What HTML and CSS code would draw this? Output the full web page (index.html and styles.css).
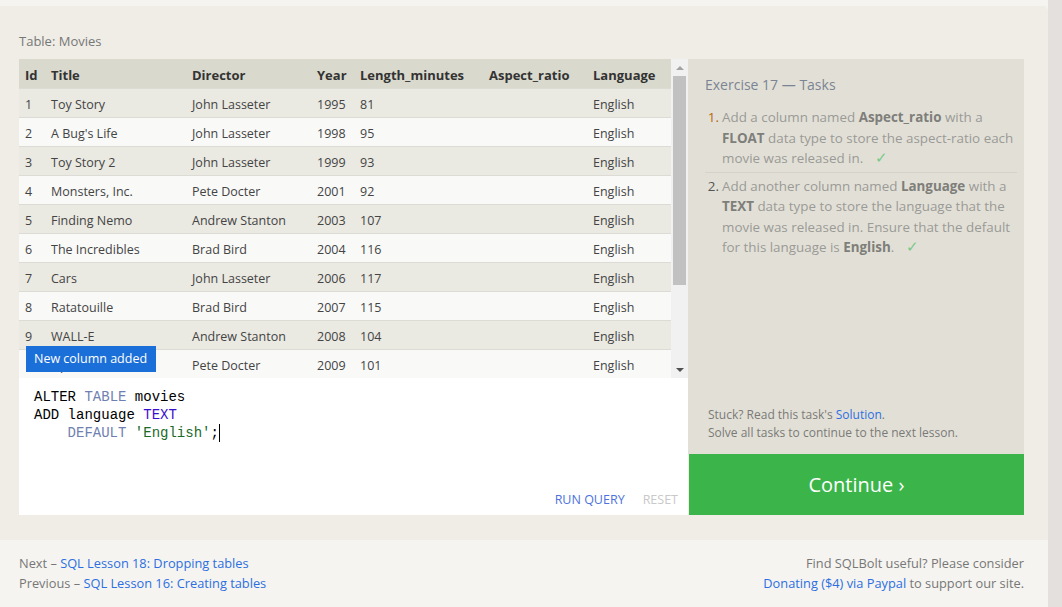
FILE: index.html
```html
<!DOCTYPE html>
<html>
<head>
<meta charset="utf-8">
<link rel="stylesheet" href="styles.css">
</head>
<body>
<div class="page">
  <div class="content">
    <div class="topstrip"></div>
    <div class="main">
      <div class="table-label">Table: Movies</div>
      <div class="workspace">
        <div class="left">
          <div class="table-area">
            <div class="table-scroll">
              <table class="movies">
                <colgroup>
                  <col style="width:26px"><col style="width:141px"><col style="width:125px"><col style="width:43px"><col style="width:129px"><col style="width:104px"><col style="width:84px">
                </colgroup>
                <thead>
                  <tr><th>Id</th><th>Title</th><th>Director</th><th>Year</th><th>Length_minutes</th><th>Aspect_ratio</th><th>Language</th></tr>
                </thead>
                <tbody>
                  <tr><td>1</td><td>Toy Story</td><td>John Lasseter</td><td>1995</td><td>81</td><td></td><td>English</td></tr>
                  <tr><td>2</td><td>A Bug's Life</td><td>John Lasseter</td><td>1998</td><td>95</td><td></td><td>English</td></tr>
                  <tr><td>3</td><td>Toy Story 2</td><td>John Lasseter</td><td>1999</td><td>93</td><td></td><td>English</td></tr>
                  <tr><td>4</td><td>Monsters, Inc.</td><td>Pete Docter</td><td>2001</td><td>92</td><td></td><td>English</td></tr>
                  <tr><td>5</td><td>Finding Nemo</td><td>Andrew Stanton</td><td>2003</td><td>107</td><td></td><td>English</td></tr>
                  <tr><td>6</td><td>The Incredibles</td><td>Brad Bird</td><td>2004</td><td>116</td><td></td><td>English</td></tr>
                  <tr><td>7</td><td>Cars</td><td>John Lasseter</td><td>2006</td><td>117</td><td></td><td>English</td></tr>
                  <tr><td>8</td><td>Ratatouille</td><td>Brad Bird</td><td>2007</td><td>115</td><td></td><td>English</td></tr>
                  <tr><td>9</td><td>WALL-E</td><td>Andrew Stanton</td><td>2008</td><td>104</td><td></td><td>English</td></tr>
                  <tr><td>10</td><td>Up</td><td>Pete Docter</td><td>2009</td><td>101</td><td></td><td>English</td></tr>
                  <tr><td>11</td><td>Toy Story 3</td><td>Lee Unkrich</td><td>2010</td><td>103</td><td></td><td>English</td></tr>
                  <tr><td>12</td><td>Cars 2</td><td>John Lasseter</td><td>2011</td><td>120</td><td></td><td>English</td></tr>
                  <tr><td>13</td><td>Brave</td><td>Brenda Chapman</td><td>2012</td><td>102</td><td></td><td>English</td></tr>
                  <tr><td>14</td><td>Monsters University</td><td>Dan Scanlon</td><td>2013</td><td>110</td><td></td><td>English</td></tr>
                </tbody>
              </table>
              <div class="tooltip">New column added</div>
            </div>
            <div class="scrollbar">
              <div class="sb-arrow sb-up"></div>
              <div class="sb-track"><div class="sb-thumb"></div></div>
              <div class="sb-arrow sb-down"></div>
            </div>
          </div>
          <div class="editor">
            <pre class="code"><span class="kw">ALTER</span> <span class="kw2">TABLE</span> movies
<span class="kw">ADD</span> language <span class="type">TEXT</span>
    <span class="kw2">DEFAULT</span> <span class="str">'English'</span>;<span class="cursor"></span></pre>
            <div class="editor-actions">
              <span class="run">RUN QUERY</span>
              <span class="reset">RESET</span>
            </div>
          </div>
        </div>
        <div class="right">
          <div class="tasks">
            <div class="tasks-title">Exercise 17 — Tasks</div>
            <ol class="task-list">
              <li class="task first"><span class="num">1.</span><span class="task-text">Add a column named <b>Aspect_ratio</b> with a <b>FLOAT</b> data type to store the aspect-ratio each movie was released in. <span class="check">✓</span></span></li>
              <li class="task"><span class="num">2.</span><span class="task-text">Add another column named <b>Language</b> with a <b>TEXT</b> data type to store the language that the movie was released in. Ensure that the default for this language is <b>English</b>. <span class="check">✓</span></span></li>
            </ol>
            <div class="tasks-help">
              <div>Stuck? Read this task's <span class="link">Solution</span>.</div>
              <div>Solve all tasks to continue to the next lesson.</div>
            </div>
          </div>
          <div class="continue">Continue ›</div>
        </div>
      </div>
    </div>
    <div class="footer">
      <div class="footer-left">
        <div>Next – <span class="link">SQL Lesson 18: Dropping tables</span></div>
        <div>Previous – <span class="link">SQL Lesson 16: Creating tables</span></div>
      </div>
      <div class="footer-right">
        <div>Find SQLBolt useful? Please consider</div>
        <div><span class="link">Donating ($4) via Paypal</span> to support our site.</div>
      </div>
    </div>
  </div>
  <div class="side-strip"></div>
</div>
</body>
</html>
```
FILE: styles.css
```css
* { box-sizing: border-box; }
html, body { margin: 0; padding: 0; }
body {
  background: #f5f4f0;
  font-family: "Open Sans", "Noto Sans", sans-serif;
  color: #555;
  width: 1062px;
  height: 607px;
  overflow: hidden;
}
.page { display: flex; height: 607px; }
.content { flex: 1; display: flex; flex-direction: column; }
.side-strip { width: 14px; background: #e3e0dd; }
.topstrip { height: 6px; background: #f5f4f0; }
.main {
  background: #efede6;
  border-radius: 0 5px 0 0;
  height: 534px;
  padding: 27px 24px 0 19px;
}
.table-label {
  font-size: 13px;
  color: #777;
  line-height: 17px;
  height: 26px;
}
.workspace { display: flex; }
.left { width: 669px; display: flex; flex-direction: column; }
.table-area { display: flex; height: 319px; }
.table-scroll {
  width: 652px;
  height: 319px;
  overflow: hidden;
  position: relative;
}
.movies {
  width: 652px;
  table-layout: fixed;
  border-collapse: collapse;
  font-size: 12.5px;
}
.movies tr { height: 29px; }
.movies th, .movies td {
  text-align: left;
  padding: 4px 0 0 6px;
  white-space: nowrap;
  overflow: hidden;
}
.movies th {
  background: #dad9cd;
  color: #333;
  font-weight: 700;
  font-size: 13px;
}
.movies td { color: #444; border-top: 1px solid #dcdbd6; }
.movies tbody tr:nth-child(odd) td { background: #eae9e2; }
.movies tbody tr:nth-child(even) td { background: #f9f9f8; }
.tooltip {
  position: absolute;
  left: 7px;
  top: 287px;
  width: 130px;
  height: 26px;
  background: #1b6fd8;
  color: #fff;
  font-size: 12.5px;
  line-height: 26px;
  padding-left: 8px;
}
.scrollbar {
  width: 17px;
  background: #f1f1f1;
  display: flex;
  flex-direction: column;
  align-items: center;
}
.sb-arrow { height: 17px; width: 17px; display: flex; align-items: center; justify-content: center; }
.sb-up::before {
  content: "";
  border-left: 4px solid transparent;
  border-right: 4px solid transparent;
  border-bottom: 4px solid #a3a3a3;
}
.sb-down::before {
  content: "";
  border-left: 4px solid transparent;
  border-right: 4px solid transparent;
  border-top: 4px solid #505050;
}
.sb-track { flex: 1; width: 100%; padding: 0 2px; }
.sb-thumb { height: 209px; background: #c1c1c1; }
.editor {
  background: #fff;
  height: 137px;
  display: flex;
  flex-direction: column;
  justify-content: space-between;
}
.code {
  margin: 0;
  padding: 10px 15px 0 15px;
  font-family: "Liberation Mono", "DejaVu Sans Mono", monospace;
  font-size: 14px;
  line-height: 18px;
  color: #000;
}
.kw { color: #000; }
.kw2 { color: #6f7fb0; }
.type { color: #3a10d0; }
.str { color: #1a6a2a; }
.cursor {
  display: inline-block;
  width: 1px;
  height: 18px;
  background: #000;
  vertical-align: top;
}
.editor-actions {
  display: flex;
  justify-content: flex-end;
  gap: 18px;
  padding: 0 10px 7px 0;
  font-size: 12.5px;
}
.run { color: #4d72dc; }
.reset { color: #c9c9c9; }
.right { width: 336px; display: flex; flex-direction: column; }
.tasks {
  background: #e2e0d6;
  height: 395px;
  padding: 16px 3px 0 17px;
  display: flex;
  flex-direction: column;
}
.tasks-title {
  font-size: 14px;
  color: #7b8494;
  line-height: 20px;
  margin-bottom: 12px;
}
.task-list { list-style: none; margin: 0; padding: 0; flex: 1; }
.task {
  display: flex;
  font-size: 13.4px;
  line-height: 20.5px;
  color: #9a9a96;
}
.task.first { border-bottom: 1px solid #d5d3c9; padding-bottom: 3px; margin-bottom: 3px; margin-right: 4px; }
.num { width: 17px; flex: none; text-align: right; padding-right: 3px; color: #555; }
.first .num { color: #b86a12; }
.task:not(.first) .task-text { padding-right: 6px; }
.task-text b { color: #7e7e7a; }
.check { color: #77c98a; margin-left: 8px; font-size: 14.5px; }
.tasks-help {
  font-size: 12px;
  line-height: 18px;
  color: #7a7a78;
  padding: 0 0 12px 3px;
}
.link { color: #2c6fe2; }
.continue {
  background: #3bb54a;
  height: 61px;
  color: #fff;
  font-size: 20px;
  display: flex;
  align-items: center;
  justify-content: center;
  margin-left: 1px;
}
.footer {
  flex: 1;
  display: flex;
  justify-content: space-between;
  padding: 13px 24px 0 19px;
  font-size: 12.8px;
  line-height: 20px;
  color: #777;
}
.footer-right { text-align: right; }
```
